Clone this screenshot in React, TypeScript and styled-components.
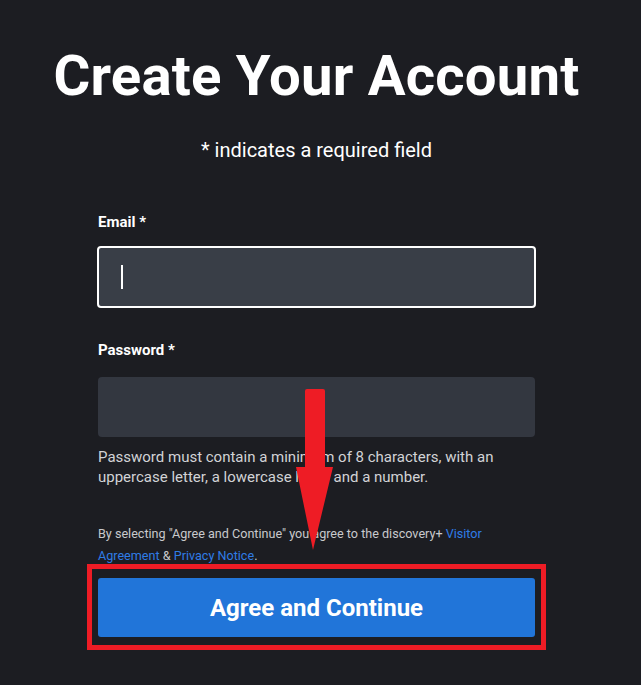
import React from "react";
import styled, { createGlobalStyle } from "styled-components";

const Global = createGlobalStyle`
  html, body { margin: 0; padding: 0; background: #1c1d22; }
  body { font-family: Roboto, "Liberation Sans", Arial, sans-serif; color: #fff; }
`;

const Page = styled.div`
  position: relative;
  width: 633px;
  height: 685px;
  display: flex;
  flex-direction: column;
  align-items: center;
  overflow: hidden;
`;

const Title = styled.h1`
  margin: 38px 0 0;
  font-size: 56.3px;
  font-weight: 700;
  line-height: 76px;
  white-space: nowrap;
  letter-spacing: 0.2px;
`;

const Subtitle = styled.p`
  margin: 20px 0 0;
  font-size: 20px;
  line-height: 32px;
  color: #fff;
`;

const Form = styled.div`
  width: 437px;
  display: flex;
  flex-direction: column;
  margin-top: 46px;
`;

const Label = styled.label<{ $gap: number }>`
  font-size: 15px;
  font-weight: 700;
  line-height: 20px;
  margin-bottom: ${(p) => p.$gap}px;
`;

const Input = styled.div<{ $focused?: boolean }>`
  box-sizing: border-box;
  height: ${(p) => (p.$focused ? "62px" : "60px")};
  margin: ${(p) => (p.$focused ? "0 -1px" : "0")};
  border-radius: 4px;
  background: ${(p) => (p.$focused ? "#393e47" : "#333740")};
  border: ${(p) => (p.$focused ? "2px solid #fff" : "none")};
  display: flex;
  align-items: center;
  padding-left: 22px;
`;

const Caret = styled.span`
  width: 2px;
  height: 24px;
  background: #fff;
`;

const FieldGap = styled.div<{ $h: number }>`
  height: ${(p) => p.$h}px;
`;

const Helper = styled.p`
  margin: 10px 0 0;
  font-size: 15px;
  line-height: 20px;
  color: #d2d3d6;
`;

const Legal = styled.p`
  margin: 36px 0 0;
  font-size: 12.6px;
  line-height: 22px;
  color: #c8c9cc;
`;

const Link = styled.a`
  color: #2f7ce6;
  text-decoration: none;
`;

const Highlight = styled.div`
  margin: -3px -11px 0;
  border: 5px solid #ee1c25;
  padding: 9px 8px 8px 6px;
`;

const Button = styled.button`
  width: 437px;
  height: 59px;
  border: none;
  border-radius: 3px;
  background: #2175d9;
  color: #fff;
  font-family: Roboto, "Liberation Sans", Arial, sans-serif;
  font-size: 24px;
  font-weight: 700;
  display: block;
`;

const Arrow = styled.svg`
  position: absolute;
  left: 295px;
  top: 388px;
`;

export default function App() {
  return (
    <>
      <Global />
      <Page>
        <Title>Create Your Account</Title>
        <Subtitle>* indicates a required field</Subtitle>
        <Form>
          <Label $gap={14}>Email *</Label>
          <Input $focused>
            <Caret />
          </Input>
          <FieldGap $h={32} />
          <Label $gap={17}>Password *</Label>
          <Input />
          <Helper>
            Password must contain a minimum of 8 characters, with an uppercase letter, a lowercase letter and a number.
          </Helper>
          <Legal>
            By selecting "Agree and Continue" you agree to the discovery+ <Link>Visitor</Link>{" "}
            <Link>Agreement</Link> &amp; <Link>Privacy Notice</Link>.
          </Legal>
          <Highlight>
            <Button>Agree and Continue</Button>
          </Highlight>
        </Form>
        <Arrow width="40" height="165" viewBox="0 0 40 165">
          <path d="M10 3 Q10 1 12 1 L28 1 Q30 1 30 3 L30 79 L38 79 L18 162 L1 79 L10 79 Z" fill="#ee1c25" />
        </Arrow>
      </Page>
    </>
  );
}
